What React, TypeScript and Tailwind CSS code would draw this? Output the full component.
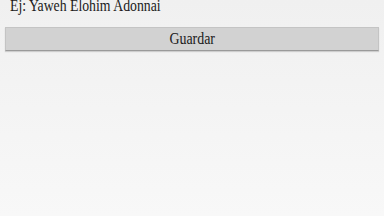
export default function App() {
  return (
    <div className="h-[216px] w-[384px] overflow-hidden bg-gradient-to-b from-[#f0f0f0] to-[#f8f8f8] font-['Liberation_Serif',serif] text-[#1a1a1a]">
      <p className="-mt-[2.5px] pl-[10px] text-[16px] leading-[16px]">
        <span className="inline-block origin-left scale-x-[0.86]">Ej: Yaweh Elohim Adonnai</span>
      </p>
      <div className="px-[5px] pt-[13.5px]">
        <button className="h-[24px] w-full border border-[#c4c4c4] border-b-[#9a9a9a] bg-[#d2d2d2] text-[16px] leading-[22px] shadow-[0_1px_1px_rgba(0,0,0,0.15)]">
          <span className="inline-block scale-x-[0.87]">Guardar</span>
        </button>
      </div>
    </div>
  )
}
